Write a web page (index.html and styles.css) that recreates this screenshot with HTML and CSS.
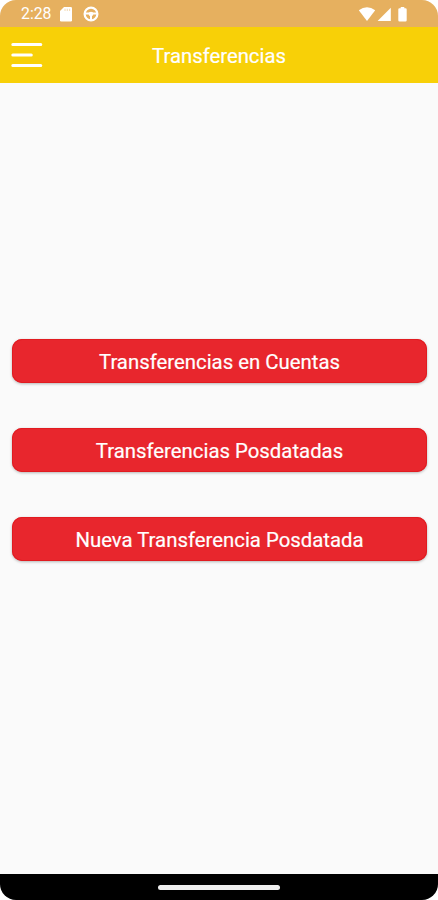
FILE: index.html
```html
<!DOCTYPE html>
<html lang="es">
<head>
<meta charset="utf-8">
<title>Transferencias</title>
<link rel="stylesheet" href="styles.css">
</head>
<body>
<div class="phone">
  <div class="status">
    <span class="time">2:28</span>
    <svg class="sd" width="12" height="15" viewBox="0 0 12 15"><path fill="#fff" d="M4 0H10.7Q12 0 12 1.3V13.2Q12 14.5 10.7 14.5H1.3Q0 14.5 0 13.2V4Z"/><path stroke="#e6b05f" stroke-width=".9" opacity=".5" d="M5 1.8v2.2M7.3 1.8v2.2M9.6 1.8v2.2"/></svg>
    <svg class="wheel" width="16" height="16" viewBox="0 0 16 16" fill="none" stroke="#fff"><circle cx="8" cy="8" r="6.4" stroke-width="2.2"/><path stroke-width="2" d="M2 7.6H14M8 8V14"/><circle cx="8" cy="8" r="2.3" fill="#fff" stroke="none"/></svg>
    <div class="signals">
      <svg width="18" height="15" viewBox="0 0 18 15"><path fill="#fff" d="M.8 3.2Q9-2.7 17.2 3.2L9 14Z"/></svg>
      <svg width="15" height="15" viewBox="0 0 15 15"><path fill="#fff" d="M13.8 .8V14H.6Z"/></svg>
      <svg width="9" height="15" viewBox="0 0 9 15"><path fill="#fff" d="M2.7 0H6.3V1.3H7.5Q8.7 1.3 8.7 2.5V13.2Q8.7 14.4 7.5 14.4H1.5Q.3 14.4 .3 13.2V2.5Q.3 1.3 1.5 1.3H2.7Z"/></svg>
    </div>
  </div>
  <header class="bar">
    <svg class="menu" width="32" height="26" viewBox="0 0 32 26" stroke="#fff" stroke-width="3" stroke-linecap="round"><path d="M1.8 2.5H29.8M1.8 13H20.3M1.8 23.5H29.8"/></svg>
    <h1>Transferencias</h1>
  </header>
  <main class="actions">
    <button>Transferencias en Cuentas</button>
    <button>Transferencias Posdatadas</button>
    <button>Nueva Transferencia Posdatada</button>
  </main>
  <div class="nav"><span class="handle"></span></div>
</div>
</body>
</html>
```

FILE: styles.css
```css
* { box-sizing: border-box; }
body { margin: 0; background: #fff; font-family: Roboto, sans-serif; color: #fff; }
.phone {
  width: 438px;
  height: 900px;
  display: flex;
  flex-direction: column;
  overflow: hidden;
  border-radius: 16px;
  background: #fafafa;
}
.status {
  height: 27px;
  flex: none;
  display: flex;
  align-items: center;
  padding: 1px 31px 0 21px;
  background: #e6b05f;
}
.time { width: 39px; font-size: 15.8px; line-height: 20px; }
.sd { margin-right: 11px; }
.signals { margin-left: auto; display: flex; }
.signals svg + svg { margin-left: 1px; }
.signals svg:last-child { margin-left: 6px; }
.bar {
  height: 56px;
  flex: none;
  display: grid;
  grid-template-columns: 32px 1fr 32px;
  align-items: center;
  padding: 0 11px;
  background: #f8d007;
}
h1 {
  margin: 2px 0 0;
  font-size: 20.3px;
  font-weight: 400;
  line-height: 24px;
  text-align: center;
  -webkit-text-stroke: .2px #fff;
}
.actions {
  flex: 1;
  display: flex;
  flex-direction: column;
  gap: 45px;
  padding: 256.4px 11px 0 12px;
}
button {
  height: 44px;
  padding: 2px 0 0;
  border: 0;
  border-radius: 10px;
  background: #e8262d;
  box-shadow: 0 1px 3px rgba(0, 0, 0, .28), inset 0 0 0 1px #e11b20;
  color: #fff;
  font: 400 20.35px/24px Roboto, sans-serif;
  -webkit-text-stroke: .2px #fff;
}
.nav {
  height: 26px;
  flex: none;
  display: flex;
  align-items: center;
  justify-content: center;
  background: #000;
}
.handle { width: 122px; height: 5px; border-radius: 3px; background: #eee; }
```
